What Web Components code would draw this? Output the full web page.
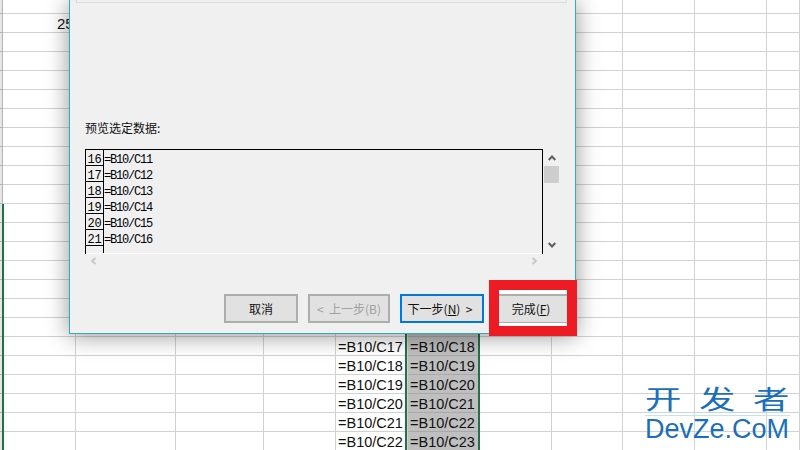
<!DOCTYPE html>
<html lang="zh"><head><meta charset="utf-8"><title>文本分列向导</title>
<style>
html,body{margin:0;padding:0;width:800px;height:450px;overflow:hidden;background:#fff}
body{position:relative;font-family:"Liberation Sans","Noto Sans CJK SC",sans-serif}
</style></head><body>
<x-sheet></x-sheet>
<x-dialog>
  <x-preview></x-preview>
  <x-btn slot="btn" style="width:74px">取消</x-btn>
  <x-btn slot="btn" style="width:82px" disabled>&lt;  上一步(B)</x-btn>
  <x-btn slot="btn" style="width:84px;padding-right:4px" primary>下一步(<u>N</u>)  &gt;</x-btn>
</x-dialog>
<x-highlight><x-btn bare style="width:68px;padding-right:4px">完成(<u>F</u>)</x-btn></x-highlight>
<x-watermark></x-watermark>
<script>
function def(name,html,init){
  customElements.define(name,class extends HTMLElement{
    constructor(){super();const r=this.attachShadow({mode:'open'});r.innerHTML=html;if(init)init(r,this);}
  });
}
const COLS=[73,100,88,72,72,72,72,71,72,72,33];
const CELLS={ '1,0':['25','n'] };
for(let i=0;i<6;i++){
  CELLS[(18+i)+',4']=['=B10/C'+(17+i),'t'];
  CELLS[(18+i)+',5']=['=B10/C'+(18+i),'t sel'];
}
CELLS['17,5']=['','sel'];
def('x-sheet',`<style>
:host{display:block;width:800px;height:450px;overflow:hidden;isolation:isolate}
.g{display:grid;grid-template-columns:3px ${COLS.map(c=>c+'px').join(' ')};grid-template-rows:14px repeat(23,19px);font:14.5px/20px "Liberation Sans",sans-serif;color:#111}
.c{box-sizing:border-box;border-right:1px solid #d2d2d2;border-bottom:1px solid #d2d2d2;overflow:hidden;white-space:nowrap}
.h{box-sizing:border-box;background:#e6e6e6;border-right:1px solid #b4b4b4;border-bottom:1px solid #b4b4b4}
.c.sel{background:#bfbfbf;border-bottom-color:#a9a9a9;border-right:0}
.t{padding-left:2px}
.n{padding-left:54px;overflow:visible;font-size:15px}
.bar{background:#217346;width:2px;grid-column:2;grid-row:12/-1;margin-left:-1px;z-index:1}
.selb{grid-column:7;grid-row:17/-1;margin-left:-3px;width:75px;border-left:2px solid #217346;border-right:2px solid #217346;z-index:1;box-sizing:border-box}
</style><div class="g"></div>`,(r)=>{
  const g=r.querySelector('.g');let h='';
  for(let y=0;y<24;y++){
    h+=`<div class="h" style="grid-area:${y+1}/1"></div>`;
    COLS.forEach((_,x)=>{
      const v=CELLS[y+','+x];
      h+=`<div class="c ${v?v[1]:''}" style="grid-area:${y+1}/${x+2}">${v?v[0]:''}</div>`;
    });
  }
  h+=`<div class="bar"></div><div class="selb"></div>`;
  g.innerHTML=h;
});
def('x-dialog',`<style>
:host{position:absolute;left:69px;top:0;width:507px;height:334px;box-sizing:border-box;background:#f0f0f0;border-right:1px solid #2aaebc;border-left:1px solid #2aaebc;border-bottom:1px solid #2aaebc;box-shadow:0 2px 22px rgba(0,0,0,.42);display:flex;flex-direction:column}
.grp{height:2px;margin:0 8px 0 6px;border:1px solid #dcdcdc;border-top:0;flex:none}
.lab{margin:116px 0 0 15px;height:18px;font:12px/18px "Noto Sans CJK SC",sans-serif;color:#111}
.pv{margin:12px 0 0 15px;height:105px}
.foot{display:flex;gap:10px;margin:40px 0 0 154px}
</style><div class="grp"></div><div class="lab">预览选定数据:</div><div class="pv"><slot></slot></div><div class="foot"><slot name="btn"></slot></div>`);
def('x-preview',`<style>
:host{display:flex;width:474px;height:105px}
.area{box-sizing:border-box;width:458px;height:105px;flex:none;border-top:1px solid #000;border-right:1px solid #000;border-left:1px solid #000;overflow:hidden}
.wrap{height:103px;overflow:hidden}
.row{display:flex;height:16px}
.num{box-sizing:border-box;width:18px;height:16px;flex:none;border-right:1px solid #000;border-bottom:1px solid #000;font:12px/20px "Liberation Mono",monospace;text-align:center;color:#000;overflow:hidden;letter-spacing:-.2px}
.txt{font:12px/21px "Liberation Mono",monospace;height:16px;color:#000;letter-spacing:-1.2px;white-space:nowrap}
.white{height:1px;background:#fff}
.sb{width:16px;display:flex;flex-direction:column;align-items:center;height:105px;padding-left:1px;box-sizing:border-box}
.sb svg{display:block;flex:none}
.th{width:15px;height:17px;background:#cdcdcd;margin-top:5px;flex:none}
.dn{margin-top:auto;margin-bottom:6px}
.up{margin-top:6px}
.hs{display:flex;justify-content:space-between;width:458px;height:8px;margin-top:3px;box-sizing:border-box;padding:0 5px;flex:none}
.col{display:flex;flex-direction:column;height:105px}
</style><div class="col"><div class="area"><div class="wrap" id="w"></div><div class="white"></div></div>
<div class="hs"><svg width="7" height="8" viewBox="0 0 7 8"><path d="M5.500 1 2 4l3.500 3" fill="none" stroke="#c8c8c8" stroke-width="2"/></svg><svg width="7" height="8" viewBox="0 0 7 8"><path d="M1.500 1 5 4 1.500 7" fill="none" stroke="#c8c8c8" stroke-width="2"/></svg></div></div>
<div class="sb"><svg class="up" width="8" height="6" viewBox="0 0 8 6"><path d="M.7 5 4 1.500 7.300 5" fill="none" stroke="#5e5e5e" stroke-width="2"/></svg><div class="th"></div>
<svg class="dn" width="8" height="6" viewBox="0 0 8 6"><path d="M.7 1 4 4.500 7.300 1" fill="none" stroke="#5e5e5e" stroke-width="2"/></svg></div>`,(r)=>{
  let h='';
  for(let i=0;i<7;i++){
    h+=`<div class="row"><div class="num">${i<6?16+i:''}</div><div class="txt">${i<6?'=B10/C'+(11+i):''}</div></div>`;
  }
  r.getElementById('w').innerHTML=h;
  r.querySelector('.row:last-child .num').style.borderBottom='0';
});
def('x-btn',`<style>
:host{display:flex;align-items:center;justify-content:center;box-sizing:border-box;height:29px;background:#e1e1e1;border:2px solid #adadad;font:12px/1 "Noto Sans CJK SC",sans-serif;color:#111;white-space:pre;flex:none}
:host([disabled]){color:#a0a0a0}
:host([primary]){border-color:#0078d7}
:host([bare]){border-width:2px 0 1px;border-color:#adadad}
</style><slot></slot>`);
def('x-highlight',`<style>
:host{position:absolute;left:489px;top:280px;width:88px;height:56px;box-sizing:border-box;border:10px solid #ed1c24;background:#fff;display:flex;align-items:center;justify-content:center}
</style><slot></slot>`);
def('x-watermark',`<style>
:host{position:absolute;left:645px;top:382px;width:150px;color:#1b6fb9;display:flex;flex-direction:column}
.cn{display:flex;gap:26px;height:33px;font:28px/33px "Noto Sans CJK SC",sans-serif;font-weight:400}
.cn span{display:block;width:28px;transform:scaleX(1.3) scaleY(.92);transform-origin:0 50%}
.ln{height:1px;width:145px;background:#bfe6f5}
.en{font:27px/27px "Liberation Sans",sans-serif;white-space:nowrap}
</style><div class="cn"><span>开</span><span>发</span><span>者</span></div><div class="ln"></div><div class="en">DevZe.CoM</div>`);
</script>
</body></html>
